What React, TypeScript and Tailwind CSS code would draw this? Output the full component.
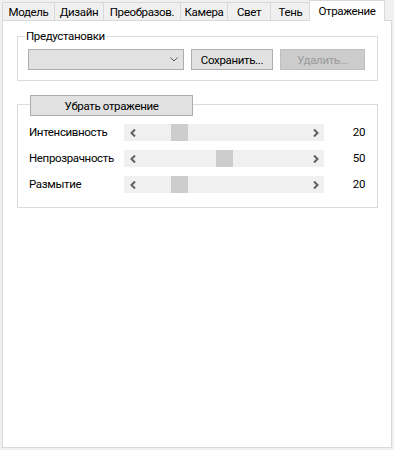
import React from "react";

const tabs = [
  { label: "Модель", w: "w-[52px]" },
  { label: "Дизайн", w: "w-[49px]" },
  { label: "Преобразов.", w: "w-[77px]" },
  { label: "Камера", w: "w-[47px]" },
  { label: "Свет", w: "w-[43px]" },
  { label: "Тень", w: "w-[41px]" },
];

const sliders = [
  { label: "Интенсивность", value: 20 },
  { label: "Непрозрачность", value: 50 },
  { label: "Размытие", value: 20 },
];

const Arrow = ({ dir }: { dir: "left" | "right" }) => (
  <svg width="6" height="8" viewBox="0 0 6 8">
    <path
      d={dir === "left" ? "M5 0.5 L1.5 4 L5 7.5" : "M1 0.5 L4.5 4 L1 7.5"}
      fill="none"
      stroke="#606060"
      strokeWidth="2"
    />
  </svg>
);

const ScrollBar = ({ value }: { value: number }) => (
  <div className="flex w-[200px] h-[17px] bg-[#f0f0f0]">
    <div className="w-[17px] h-full flex items-center justify-center">
      <Arrow dir="left" />
    </div>
    <div className="relative flex-1 h-full">
      {/* thumb */}
      <div
        className="absolute top-0 w-[17px] h-full bg-[#cdcdcd]"
        style={{ left: Math.round(value * 1.47) + 1 }}
      />
    </div>
    <div className="w-[17px] h-full flex items-center justify-center">
      <Arrow dir="right" />
    </div>
  </div>
);

const App = () => {
  return (
    <div className="w-[394px] h-[450px] bg-[#f0f0f0] overflow-hidden text-[11.5px] tracking-[-0.35px] leading-[16px] text-black font-['Segoe_UI','Roboto',sans-serif]">
      {/* Tab strip */}
      <div className="flex items-end h-[20px] pl-[2px]">
        {tabs.map((t) => (
          <div
            key={t.label}
            className={`${t.w} h-[18px] border-t border-l border-[#d9d9d9] bg-[#f0f0f0] flex items-center justify-center whitespace-nowrap ${
              t.label === "Тень" ? "border-r" : ""
            }`}
          >
            {t.label}
          </div>
        ))}
        <div className="relative z-10 -ml-[2px] -mb-px w-[76px] h-[21px] border-t border-l border-r border-[#d9d9d9] bg-white flex justify-center pt-[2px] whitespace-nowrap">
          Отражение
        </div>
      </div>

      {/* Panel */}
      <div className="ml-[2px] w-[390px] h-[428px] border border-[#d9d9d9] bg-white">
        {/* Presets group */}
        <div className="relative ml-[14px] mt-[15px] w-[361px] h-[45px] border border-[#dcdcdc]">
          <span className="absolute left-[7px] -top-[9px] bg-white px-[1px]">Предустановки</span>
          <div className="flex gap-[7px] pl-[10px] pt-[12px]">
            <div className="w-[156px] h-[21px] border border-[#adadad] bg-[#e1e1e1] flex items-center justify-end pr-[5px]">
              <svg width="8" height="5" viewBox="0 0 8 5">
                <path d="M0.5 0.5 L4 4 L7.5 0.5" fill="none" stroke="#555" strokeWidth="1" />
              </svg>
            </div>
            <button className="w-[82px] h-[21px] border border-[#adadad] bg-[#e1e1e1] flex items-center justify-center">
              Сохранить...
            </button>
            <button
              disabled
              className="w-[85px] h-[21px] border border-[#bfbfbf] bg-[#cccccc] text-[#9a9a9a] flex items-center justify-center"
            >
              Удалить...
            </button>
          </div>
        </div>

        {/* Reflection group */}
        <div className="relative ml-[14px] mt-[23px] w-[361px] h-[104px] border border-[#dcdcdc]">
          <button className="absolute left-[12px] -top-[10px] w-[163px] h-[21px] border border-[#adadad] bg-[#e1e1e1] flex items-center justify-center">
            Убрать отражение
          </button>
          <div className="flex flex-col gap-[9px] pl-[11px] pt-[19px]">
            {sliders.map((s) => (
              <div key={s.label} className="flex items-center h-[17px]">
                <span className="w-[95px] whitespace-nowrap pb-[2px]">{s.label}</span>
                <ScrollBar value={s.value} />
                <span className="w-[41px] text-right pb-[2px]">{s.value}</span>
              </div>
            ))}
          </div>
        </div>
      </div>
    </div>
  );
};

export default App;
